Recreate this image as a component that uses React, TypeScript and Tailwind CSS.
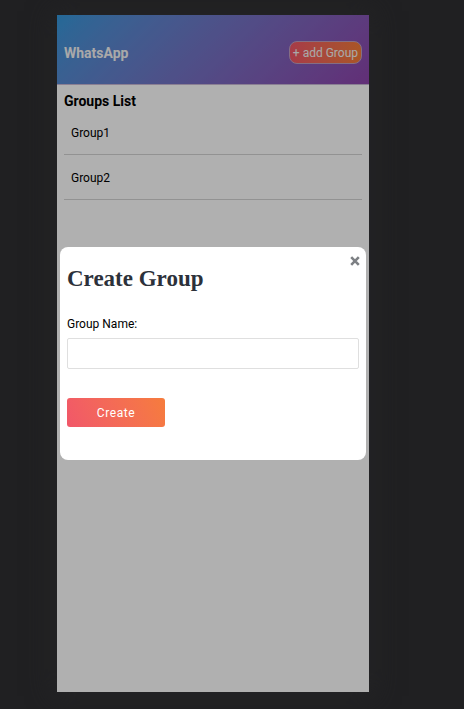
import { useState } from "react";

const groups = ["Group1", "Group2"];

export default function App() {
  const [name, setName] = useState("");

  return (
    <div className="flex min-h-screen bg-[#202022] pt-[15px] pr-[95px] pb-[17px] pl-[57px] font-[Roboto,sans-serif] text-xs">
      <main className="relative flex min-w-0 flex-1 flex-col bg-white text-black shadow-[0_0_24px_4px_#242426]">
        <header className="flex items-center justify-between border-b border-[#c9b8d6] bg-linear-135 from-[#3498db] to-[#8e44ad] px-[7px] pt-[26px] pb-5">
          <h1 className="text-sm leading-5 font-bold text-[#f5f5f5]">WhatsApp</h1>
          <button
            type="button"
            className="h-[23px] rounded-lg border border-[#c0a0c0] bg-linear-to-r from-[#f25767] to-[#f57c37] px-[3px] text-xs text-[#f5f5f5]"
          >
            + add Group
          </button>
        </header>

        <section className="px-[7px] pt-[7px]">
          <h2 className="text-sm leading-[18px] font-bold">Groups List</h2>
          <ul>
            {groups.map((group) => (
              <li key={group} className="border-b border-[#d4d4d4] px-[7px] pt-[15px] pb-[13px] leading-4">
                {group}
              </li>
            ))}
          </ul>
        </section>

        <div className="absolute inset-0 flex items-center bg-black/31 px-[3px]">
          <div
            role="dialog"
            aria-modal="true"
            aria-labelledby="dialog-title"
            className="relative w-full rounded-lg bg-white px-[7px] pt-[17px] pb-[33px]"
          >
            <button
              type="button"
              aria-label="Close"
              className="absolute top-2 right-[5px] flex size-3 items-center justify-center text-[#7d8084]"
            >
              <svg viewBox="0 0 10 10" className="size-[10px]" fill="none" stroke="currentColor" strokeWidth="2.6">
                <path d="M1.2 1.2 8.8 8.8M8.8 1.2 1.2 8.8" />
              </svg>
            </button>
            <h2
              id="dialog-title"
              className="font-['Liberation_Serif',serif] text-[23px] leading-[30px] font-bold text-[#2c313a]"
            >
              Create Group
            </h2>
            <form onSubmit={(event) => event.preventDefault()}>
              <label htmlFor="group-name" className="mt-[22px] block leading-4">
                Group Name:
              </label>
              <input
                id="group-name"
                type="text"
                value={name}
                onChange={(event) => setName(event.target.value)}
                className="mt-1.5 block h-[31px] w-full rounded-xs border border-[#dfdfdf] bg-white px-2 outline-none"
              />
              <button
                type="submit"
                className="mt-[29px] block h-[29px] w-[98px] rounded-[3px] bg-linear-65 from-[#f15769] to-[#f67c3c] text-xs tracking-wider text-white"
              >
                Create
              </button>
            </form>
          </div>
        </div>
      </main>
    </div>
  );
}
